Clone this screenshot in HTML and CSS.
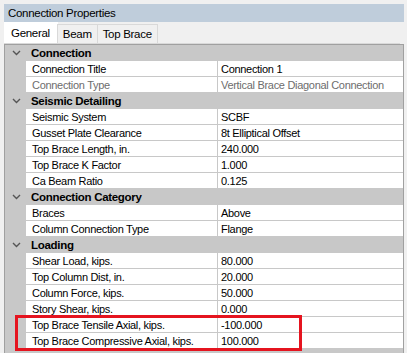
FILE: index.html
```html
<!DOCTYPE html>
<html>
<head>
<meta charset="utf-8">
<link rel="stylesheet" href="styles.css">
</head>
<body>
<div class="panel">
  <div class="titlebar">Connection Properties</div>
  <div class="tabs">
    <div class="tab active">General</div>
    <div class="tab">Beam</div>
    <div class="tab">Top Brace</div>
  </div>
  <div class="grid">
    <div class="cat"><span class="chev"><svg width="9" height="6" viewBox="0 0 9 6"><polyline points="1,1 4.5,4.5 8,1" fill="none" stroke="#555" stroke-width="1.4"/></svg></span><span class="catlabel">Connection</span></div>
    <div class="row"><span class="m"></span><span class="k">Connection Title</span><span class="v">Connection 1</span></div>
    <div class="row ro"><span class="m"></span><span class="k">Connection Type</span><span class="v">Vertical Brace Diagonal Connection</span></div>
    <div class="cat"><span class="chev"><svg width="9" height="6" viewBox="0 0 9 6"><polyline points="1,1 4.5,4.5 8,1" fill="none" stroke="#555" stroke-width="1.4"/></svg></span><span class="catlabel">Seismic Detailing</span></div>
    <div class="row"><span class="m"></span><span class="k">Seismic System</span><span class="v">SCBF</span></div>
    <div class="row"><span class="m"></span><span class="k">Gusset Plate Clearance</span><span class="v">8t Elliptical Offset</span></div>
    <div class="row"><span class="m"></span><span class="k">Top Brace Length, in.</span><span class="v">240.000</span></div>
    <div class="row"><span class="m"></span><span class="k">Top Brace K Factor</span><span class="v">1.000</span></div>
    <div class="row"><span class="m"></span><span class="k">Ca Beam Ratio</span><span class="v">0.125</span></div>
    <div class="cat"><span class="chev"><svg width="9" height="6" viewBox="0 0 9 6"><polyline points="1,1 4.5,4.5 8,1" fill="none" stroke="#555" stroke-width="1.4"/></svg></span><span class="catlabel">Connection Category</span></div>
    <div class="row"><span class="m"></span><span class="k">Braces</span><span class="v">Above</span></div>
    <div class="row"><span class="m"></span><span class="k">Column Connection Type</span><span class="v">Flange</span></div>
    <div class="cat"><span class="chev"><svg width="9" height="6" viewBox="0 0 9 6"><polyline points="1,1 4.5,4.5 8,1" fill="none" stroke="#555" stroke-width="1.4"/></svg></span><span class="catlabel">Loading</span></div>
    <div class="row"><span class="m"></span><span class="k">Shear Load, kips.</span><span class="v">80.000</span></div>
    <div class="row"><span class="m"></span><span class="k">Top Column Dist, in.</span><span class="v">20.000</span></div>
    <div class="row"><span class="m"></span><span class="k">Column Force, kips.</span><span class="v">50.000</span></div>
    <div class="row"><span class="m"></span><span class="k">Story Shear, kips.</span><span class="v">0.000</span></div>
    <div class="row"><span class="m"></span><span class="k">Top Brace Tensile Axial, kips.</span><span class="v">-100.000</span></div>
    <div class="row"><span class="m"></span><span class="k">Top Brace Compressive Axial, kips.</span><span class="v">100.000</span></div>
  </div>
  <div class="highlight"></div>
</div>
</body>
</html>
```

FILE: styles.css
```css
html, body {
  margin: 0;
  padding: 0;
  background: #f0f0f0;
  width: 407px;
  height: 353px;
  overflow: hidden;
}
.panel {
  position: relative;
  padding: 4px 3px 0 4px;
  font-family: "Liberation Sans", Arial, sans-serif;
  font-size: 11px;
  letter-spacing: -0.3px;
  color: #000;
}
.titlebar {
  height: 18px;
  line-height: 18px;
  background: #bfcddb;
  padding-left: 4px;
  font-size: 11.5px;
}
.tabs {
  display: flex;
  height: 21px;
  align-items: flex-end;
  border-bottom: 1px solid #d9d9d9;
  margin-right: 4px;
  font-size: 11.5px;
}
.tab {
  height: 19px;
  line-height: 19px;
  padding: 0 5px;
  border: 1px solid #d9d9d9;
  border-bottom: none;
  background: #f0f0f0;
  box-sizing: border-box;
  margin-left: -1px;
}
.tab.active {
  height: 21px;
  background: #ffffff;
  line-height: 20px;
  margin-left: 0;
  padding: 0 7px 0 6px;
  border-color: #ffffff;
}
.grid {
  border: 1px solid #a0a0a0;
  border-bottom: none;
  background: #c8c8c8;
  height: 310px;
  box-sizing: border-box;
  display: flex;
  flex-direction: column;
}
.cat {
  display: flex;
  align-items: center;
  height: 16px;
  line-height: 17px;
  flex: none;
  background: #c8c8c8;
  font-weight: bold;
  font-size: 11.5px;
}
.chev {
  width: 26px;
  display: flex;
  align-items: center;
  justify-content: center;
  padding-right: 4px;
  box-sizing: border-box;
}
.row {
  display: flex;
  height: 16px;
  flex: none;
  background: #c8c8c8;
}
.row .m {
  width: 21px;
  flex: none;
}
.row .k, .row .v {
  background: #ffffff;
  border-bottom: 1px solid #c8c8c8;
  height: 16px;
  box-sizing: border-box;
  line-height: 17px;
  white-space: nowrap;
  overflow: hidden;
}
.row .k {
  width: 192px;
  flex: none;
  padding-left: 6px;
  border-right: 1px solid #c8c8c8;
}
.row .v {
  flex: 1;
  padding-left: 3px;
}
.row.ro .v,
.row.ro .k {
  color: #6d6d6d;
}
.highlight {
  position: absolute;
  left: 15px;
  top: 315px;
  width: 287px;
  height: 36px;
  border: 3px solid #e5141f;
  box-sizing: border-box;
}
```
